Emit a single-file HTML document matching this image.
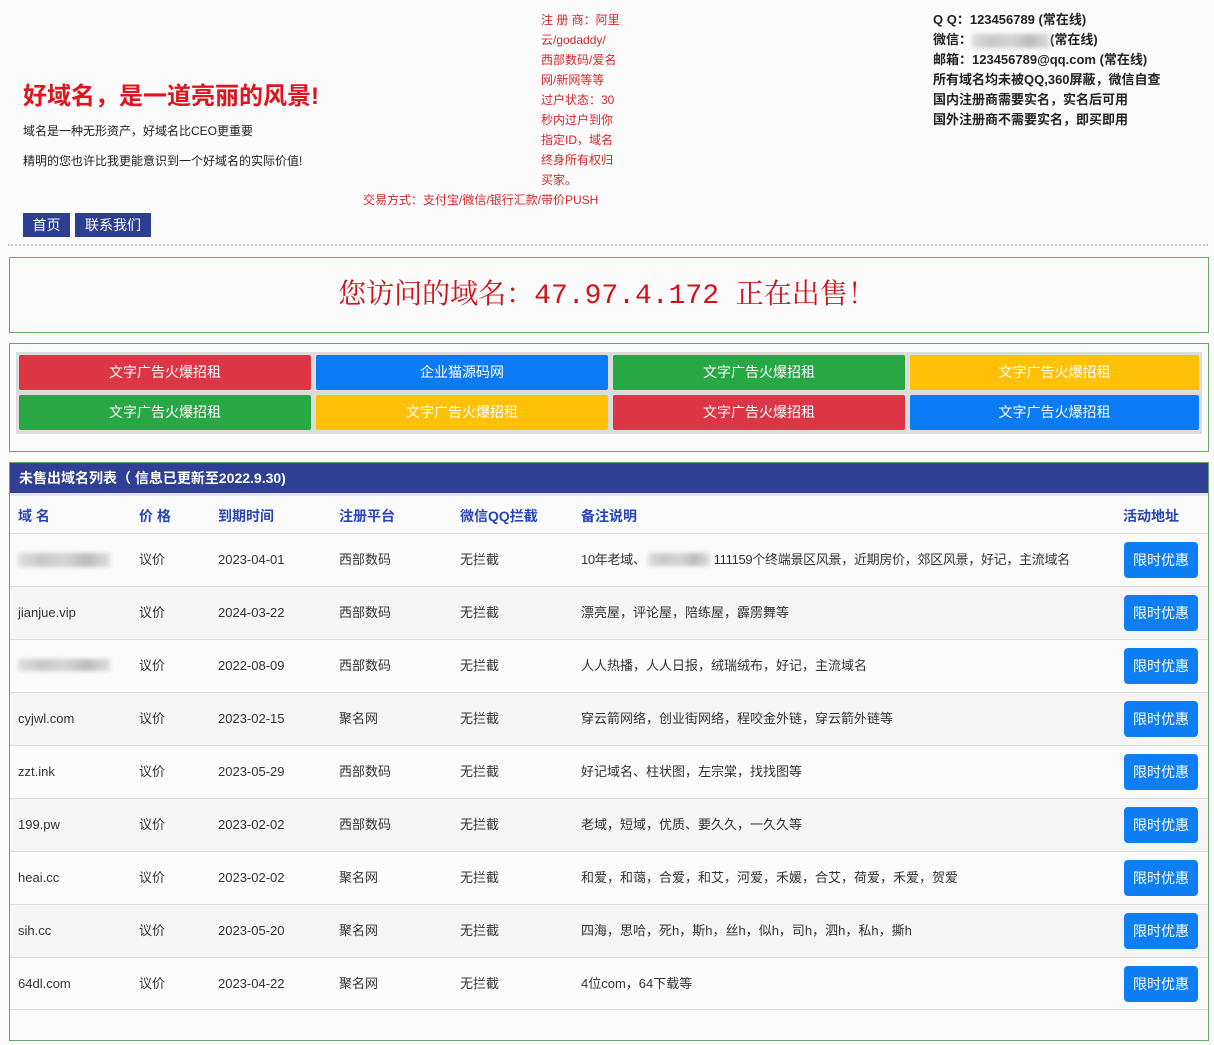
<!DOCTYPE html>
<html><head><meta charset="utf-8"><style>
*{margin:0;padding:0;box-sizing:border-box}
body{width:1214px;height:1045px;background:#fbfbfb;font-family:"Liberation Sans","Noto Sans CJK SC",sans-serif;position:relative;overflow:hidden;color:#333}
.a{position:absolute;white-space:nowrap}
.red{color:#d8262b;font-size:12px;line-height:20px}
.rc{font-size:13px;font-weight:bold;color:#222;line-height:20px}
.nav{position:absolute;top:213px;height:24px;background:#2c3e91;color:#fff;font-size:14px;line-height:24px;text-align:center}
.box{position:absolute;left:9px;width:1200px;border:1px solid #6aa86a}
.ad{position:absolute;height:35px;color:#fff;font-size:14px;line-height:35px;text-align:center;border-radius:2px}
.th{position:absolute;top:506px;font-size:14px;font-weight:bold;color:#2844b5;line-height:20px}
.row{position:absolute;left:10px;width:1198px;height:53px;border-top:1px solid #ddd}
.row>span{position:absolute;top:17px;font-size:13px;line-height:18px;height:18px;color:#333;white-space:nowrap}
.btn{position:absolute;left:1114px;top:8px;width:74px;height:36px;background:#0d7ef3;border-radius:4px;color:#fff;font-size:14px;line-height:36px;text-align:center}
.blur{display:inline-block;position:static;vertical-align:top;margin-top:2px;background:linear-gradient(90deg,#ddd,#c8c8c8,#d4d4d4,#bcbcbc,#ddd);filter:blur(2px)}
</style></head><body>
<div class="a" style="left:23px;top:76px;font-size:24px;font-weight:bold;color:#e0141e">好域名，是一道亮丽的风景!</div>
<div class="a" style="left:23px;top:122px;font-size:12px;color:#222">域名是一种无形资产，好域名比CEO更重要</div>
<div class="a" style="left:23px;top:152px;font-size:12px;color:#222">精明的您也许比我更能意识到一个好域名的实际价值!</div>
<div class="a red" style="left:541px;top:10px">注 册 商：阿里<br>云/godaddy/<br>西部数码/爱名<br>网/新网等等<br>过户状态：30<br>秒内过户到你<br>指定ID，域名<br>终身所有权归<br>买家。</div>
<div class="a red" style="left:363px;top:190px">交易方式：支付宝/微信/银行汇款/带价PUSH</div>
<div class="a rc" style="left:933px;top:10px">Q Q：123456789 (常在线)<br>微信：<span class="blur" style="width:78px;height:14px;vertical-align:middle;margin-top:0"></span>(常在线)<br>邮箱：123456789@qq.com (常在线)<br>所有域名均未被QQ,360屏蔽，微信自查<br>国内注册商需要实名，实名后可用<br>国外注册商不需要实名，即买即用</div>
<div class="nav" style="left:23px;width:47px">首页</div>
<div class="nav" style="left:75px;width:76px">联系我们</div>
<div class="a" style="left:8px;top:244px;width:1200px;border-top:2px dotted #ccc"></div>
<div class="box" style="top:257px;height:76px"></div>
<div class="a" style="left:0;width:1214px;top:272px;text-align:center;font-family:'Liberation Mono','Noto Serif CJK SC',serif;font-size:28px;color:#d0121b">您访问的域名：47.97.4.172 正在出售！</div>
<div class="box" style="top:343px;height:109px"></div>
<div class="a" style="left:16px;top:352px;width:1186px;height:82px;background:#dcdcdc"></div>
<div class="ad" style="left:19px;top:355px;width:292px;background:#dc3545">文字广告火爆招租</div>
<div class="ad" style="left:316px;top:355px;width:292px;background:#0b7bf5">企业猫源码网</div>
<div class="ad" style="left:613px;top:355px;width:292px;background:#28a745">文字广告火爆招租</div>
<div class="ad" style="left:910px;top:355px;width:289px;background:#ffc107">文字广告火爆招租</div>
<div class="ad" style="left:19px;top:395px;width:292px;background:#28a745">文字广告火爆招租</div>
<div class="ad" style="left:316px;top:395px;width:292px;background:#ffc107">文字广告火爆招租</div>
<div class="ad" style="left:613px;top:395px;width:292px;background:#dc3545">文字广告火爆招租</div>
<div class="ad" style="left:910px;top:395px;width:289px;background:#0b7bf5">文字广告火爆招租</div>
<div class="box" style="top:462px;height:579px"></div>
<div class="a" style="left:10px;top:463px;width:1198px;height:30px;background:#2e3f94;color:#fff;font-size:14px;font-weight:bold;line-height:30px;padding-left:9px">未售出域名列表（ 信息已更新至2022.9.30)</div>
<div class="a" style="left:10px;top:493px;width:1198px;height:3px;background:#e6e6e6"></div>
<div class="th" style="left:18px">域 名</div><div class="th" style="left:139px">价 格</div><div class="th" style="left:218px">到期时间</div><div class="th" style="left:339px">注册平台</div><div class="th" style="left:460px">微信QQ拦截</div><div class="th" style="left:581px">备注说明</div><div class="th" style="left:1123px">活动地址</div>

<div class="row" style="top:533px;background:#fbfbfb"><span style="left:8px"><span class="blur" style="width:92px;height:14px"></span></span><span style="left:129px">议价</span><span style="left:208px">2023-04-01</span><span style="left:329px">西部数码</span><span style="left:450px">无拦截</span><span style="left:571px;letter-spacing:-0.3px">10年老域、<span class="blur" style="width:62px;height:13px;margin:2px 4px 0 2px"></span>111159个终端景区风景，近期房价，郊区风景，好记，主流域名</span><div class="btn">限时优惠</div></div>
<div class="row" style="top:586px;background:#f5f5f5"><span style="left:8px">jianjue.vip</span><span style="left:129px">议价</span><span style="left:208px">2024-03-22</span><span style="left:329px">西部数码</span><span style="left:450px">无拦截</span><span style="left:571px">漂亮屋，评论屋，陪练屋，霹雳舞等</span><div class="btn">限时优惠</div></div>
<div class="row" style="top:639px;background:#fbfbfb"><span style="left:8px"><span class="blur" style="width:92px;height:12px"></span></span><span style="left:129px">议价</span><span style="left:208px">2022-08-09</span><span style="left:329px">西部数码</span><span style="left:450px">无拦截</span><span style="left:571px">人人热播，人人日报，绒瑞绒布，好记，主流域名</span><div class="btn">限时优惠</div></div>
<div class="row" style="top:692px;background:#f5f5f5"><span style="left:8px">cyjwl.com</span><span style="left:129px">议价</span><span style="left:208px">2023-02-15</span><span style="left:329px">聚名网</span><span style="left:450px">无拦截</span><span style="left:571px">穿云箭网络，创业街网络，程咬金外链，穿云箭外链等</span><div class="btn">限时优惠</div></div>
<div class="row" style="top:745px;background:#fbfbfb"><span style="left:8px">zzt.ink</span><span style="left:129px">议价</span><span style="left:208px">2023-05-29</span><span style="left:329px">西部数码</span><span style="left:450px">无拦截</span><span style="left:571px">好记域名、柱状图，左宗棠，找找图等</span><div class="btn">限时优惠</div></div>
<div class="row" style="top:798px;background:#f5f5f5"><span style="left:8px">199.pw</span><span style="left:129px">议价</span><span style="left:208px">2023-02-02</span><span style="left:329px">西部数码</span><span style="left:450px">无拦截</span><span style="left:571px">老域，短域，优质、要久久，一久久等</span><div class="btn">限时优惠</div></div>
<div class="row" style="top:851px;background:#fbfbfb"><span style="left:8px">heai.cc</span><span style="left:129px">议价</span><span style="left:208px">2023-02-02</span><span style="left:329px">聚名网</span><span style="left:450px">无拦截</span><span style="left:571px">和爱，和蔼，合爱，和艾，河爱，禾媛，合艾，荷爱，禾爱，贺爱</span><div class="btn">限时优惠</div></div>
<div class="row" style="top:904px;background:#f5f5f5"><span style="left:8px">sih.cc</span><span style="left:129px">议价</span><span style="left:208px">2023-05-20</span><span style="left:329px">聚名网</span><span style="left:450px">无拦截</span><span style="left:571px">四海，思哈，死h，斯h，丝h，似h，司h，泗h，私h，撕h</span><div class="btn">限时优惠</div></div>
<div class="row" style="top:957px;background:#fbfbfb;border-bottom:1px solid #ddd"><span style="left:8px">64dl.com</span><span style="left:129px">议价</span><span style="left:208px">2023-04-22</span><span style="left:329px">聚名网</span><span style="left:450px">无拦截</span><span style="left:571px">4位com，64下载等</span><div class="btn">限时优惠</div></div>
</body></html>
